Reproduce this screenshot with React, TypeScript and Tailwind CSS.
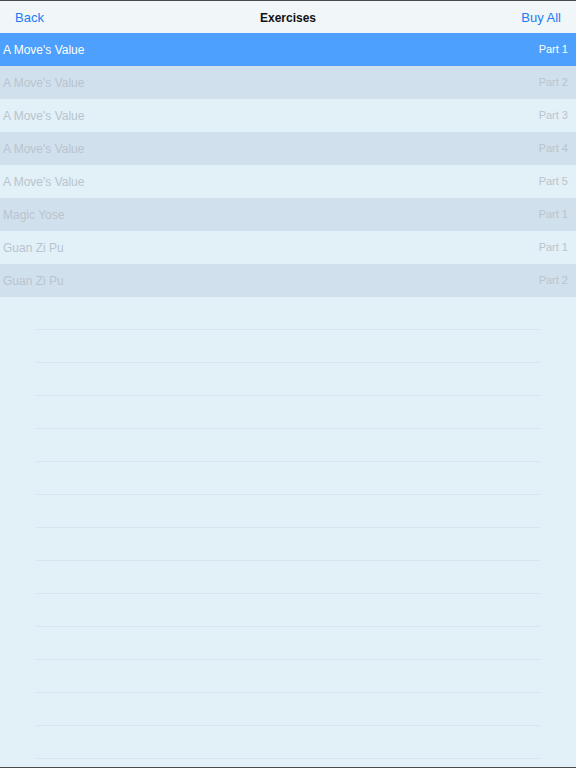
const rows = [
  { title: "A Move's Value", part: "Part 1" },
  { title: "A Move's Value", part: "Part 2" },
  { title: "A Move's Value", part: "Part 3" },
  { title: "A Move's Value", part: "Part 4" },
  { title: "A Move's Value", part: "Part 5" },
  { title: "Magic Yose", part: "Part 1" },
  { title: "Guan Zi Pu", part: "Part 1" },
  { title: "Guan Zi Pu", part: "Part 2" },
];

export default function App() {
  return (
    <div
      className="flex h-[768px] w-[576px] flex-col overflow-hidden border-y border-[#4a4a4a] bg-[#e2f0f8]"
      style={{ fontFamily: '"Liberation Sans", Arial, sans-serif' }}
    >
      <header className="grid h-[32px] shrink-0 grid-cols-3 items-center bg-[#f1f6f9] px-[15px] pt-px text-[13px]">
        <button className="justify-self-start text-[#1c7cf4]">Back</button>
        <h1 className="justify-self-center text-[12px] font-bold text-[#111]">Exercises</h1>
        <button className="justify-self-end text-[#1c7cf4]">Buy All</button>
      </header>

      <ul className="flex flex-col">
        {rows.map((row, i) => {
          const selected = i === 0;
          const bg = selected
            ? "bg-[#4da0fd] text-white"
            : i % 2 === 1
              ? "bg-[#d1e0ed] text-[#b9c4cd]"
              : "bg-[#e2f0f8] text-[#b9c4cd]";
          return (
            <li
              className={`flex h-[33px] items-center justify-between pl-[3px] pr-[8px] ${bg}`}
              key={`${row.title}-${row.part}`}
            >
              <span className="text-[12px]">{row.title}</span>
              <span className="text-[11px]">{row.part}</span>
            </li>
          );
        })}
      </ul>

      {/* empty table lines */}
      <div className="flex flex-col">
        {Array.from({ length: 14 }).map((_, i) => (
          <div className="mx-[36px] h-[33px] border-b border-[#d6e5ef]" key={i} />
        ))}
      </div>
    </div>
  );
}
